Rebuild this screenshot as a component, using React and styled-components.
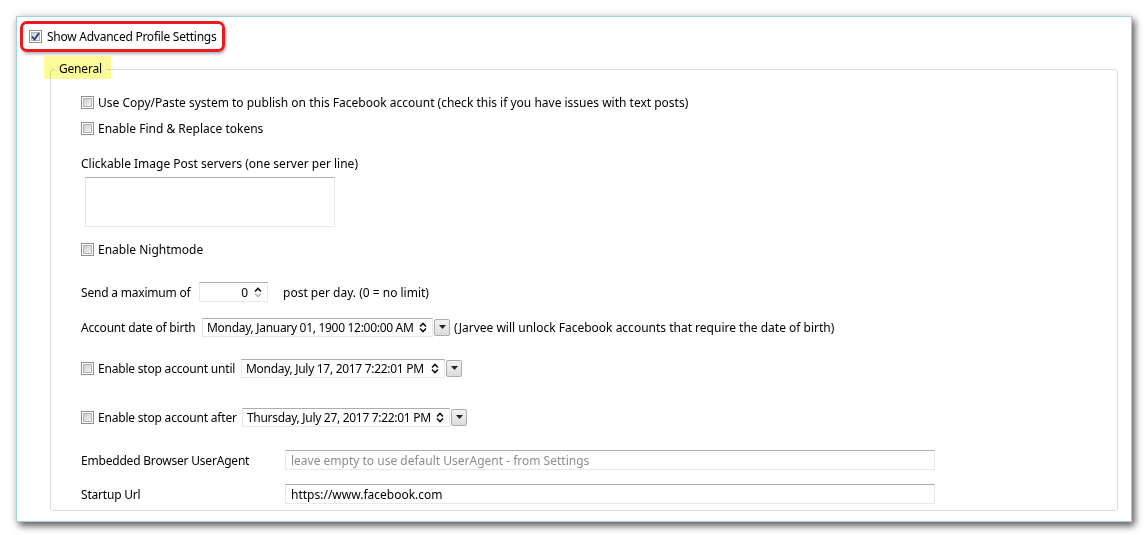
import React from 'react';
import styled, { createGlobalStyle } from 'styled-components';

const GlobalStyle = createGlobalStyle`
  html, body { margin: 0; padding: 0; background: #fff; }
  body {
    font-family: "Noto Sans", "Open Sans", sans-serif;
    font-size: 12px;
    color: #000;
  }
`;

const CheckMark = () => (
  <svg width="9" height="9" viewBox="0 0 9 9">
    <path d="M1 4.5 L3.5 7.5 L8 1" fill="none" stroke="#2b3589" strokeWidth="1.8" />
  </svg>
);

const SpinArrows = ({ downDisabled }) => (
  <svg width="8" height="13" viewBox="0 0 8 13">
    <path d="M1 5.5 L4 2.5 L7 5.5" fill="none" stroke="#111" strokeWidth="1.6" />
    <path d="M1 7.5 L4 10.5 L7 7.5" fill="none" stroke={downDisabled ? '#b8b8b8' : '#111'} strokeWidth="1.6" />
  </svg>
);

const CheckBox = ({ checked }) => (
  <Box>{checked && <CheckMark />}</Box>
);

const DatePicker = ({ value, width }) => (
  <PickerWrap>
    <PickerField $w={width}>
      <span>{value}</span>
      <SpinArrows />
    </PickerField>
    <DropButton>
      <svg width="7" height="4" viewBox="0 0 7 4"><path d="M0 0 H7 L3.5 4 Z" fill="#222" /></svg>
    </DropButton>
  </PickerWrap>
);

const App = () => (
  <>
    <GlobalStyle />
    <Page>
      <Window>
        <Annotated>
          <CheckBox checked />
          <span>Show Advanced Profile Settings</span>
        </Annotated>

        <GroupBox>
          <Legend>
            General
            <Highlight />
          </Legend>

          <Row $top={15}>
            <CheckBox />
            <span>Use Copy/Paste system to publish on this Facebook account (check this if you have issues with text posts)</span>
          </Row>
          <Row $top={6}>
            <CheckBox />
            <span>Enable Find &amp; Replace tokens</span>
          </Row>
          <Row $top={15}>
            <span>Clickable Image Post servers (one server per line)</span>
          </Row>
          <TextArea />
          <Row $top={12}>
            <CheckBox />
            <span>Enable Nightmode</span>
          </Row>
          <Row $top={23}>
            <Label $w={114}>Send a maximum of</Label>
            <NumberField>
              <span>0</span>
              <SpinArrows downDisabled />
            </NumberField>
            <Note $gap={15}>post per day. (0 = no limit)</Note>
          </Row>
          <Row $top={15}>
            <Label $w={117}>Account date of birth</Label>
            <DatePicker value="Monday, January 01, 1900 12:00:00 AM" width={231} />
            <Note $gap={4}>(Jarvee will unlock Facebook accounts that require the date of birth)</Note>
          </Row>
          <Row $top={21}>
            <CheckBox />
            <Label $w={139}>Enable stop account until</Label>
            <DatePicker value="Monday, July 17, 2017 7:22:01 PM" width={204} />
          </Row>
          <Row $top={29}>
            <CheckBox />
            <Label $w={140}>Enable stop account after</Label>
            <DatePicker value="Thursday, July 27, 2017 7:22:01 PM" width={208} />
          </Row>
          <Row $top={23}>
            <Label $w={200}>Embedded Browser UserAgent</Label>
            <TextInput $placeholder>leave empty to use default UserAgent - from Settings</TextInput>
          </Row>
          <Row $top={14}>
            <Label $w={200}>Startup Url</Label>
            <TextInput>https://www.facebook.com</TextInput>
          </Row>
        </GroupBox>
      </Window>
    </Page>
  </>
);

export default App;

const Page = styled.div`
  width: 1147px;
  height: 535px;
  box-sizing: border-box;
  padding: 16px 0 0 16px;
  overflow: hidden;
`;

const Window = styled.div`
  width: 1116px;
  height: 506px;
  box-sizing: border-box;
  border: 1px solid #9fd3e3;
  background: #fff;
  box-shadow: 3px 4px 7px rgba(0, 0, 0, 0.6), 0 0 9px rgba(0, 0, 0, 0.12);
  padding: 4px 13px 0 3px;
  overflow: hidden;
  display: flex;
  flex-direction: column;
`;

const Annotated = styled.div`
  align-self: flex-start;
  display: inline-flex;
  align-items: center;
  gap: 5px;
  box-sizing: border-box;
  height: 31px;
  padding: 0 5px 0 6px;
  border: 3px solid #ea1b1f;
  border-radius: 7px;
  box-shadow: 1px 2px 3px rgba(0, 0, 0, 0.3);
  white-space: nowrap;
  letter-spacing: -0.25px;
`;

const Box = styled.span`
  position: relative;
  flex: none;
  width: 13px;
  height: 13px;
  box-sizing: border-box;
  border: 1px solid #8e8f8f;
  background: #fff;
  display: flex;
  align-items: center;
  justify-content: center;

  &::before {
    content: "";
    position: absolute;
    inset: 1px;
    background: linear-gradient(135deg, #cbcdcf, #f3f3f3);
    border: 1px solid #aeb3b9;
    box-sizing: border-box;
  }

  svg { position: relative; }
`;

const GroupBox = styled.div`
  margin: 17px 0 0 30px;
  border: 1px solid #d5dfe5;
  border-radius: 3px;
  padding: 0 0 6px 30px;
  display: flex;
  flex-direction: column;
`;

const Legend = styled.span`
  position: relative;
  align-self: flex-start;
  margin: -9px 0 0 -26px;
  padding: 0 4px;
  line-height: 16px;
  background: #fff;
  letter-spacing: -0.2px;
`;

const Highlight = styled.span`
  position: absolute;
  left: -11px;
  top: -5px;
  width: 67px;
  height: 23px;
  background: #fcfb9a;
  mix-blend-mode: multiply;
  pointer-events: none;
`;

const Row = styled.div`
  display: flex;
  align-items: center;
  gap: 4px;
  height: 20px;
  margin-top: ${({ $top }) => $top}px;
  white-space: nowrap;
`;

const Label = styled.span`
  flex: none;
  width: ${({ $w }) => $w}px;
  letter-spacing: -0.2px;
`;

const Note = styled.span`
  margin-left: ${({ $gap }) => $gap - 4}px;
`;

const TextArea = styled.div`
  margin: 4px 0 0 4px;
  width: 250px;
  height: 50px;
  box-sizing: border-box;
  border: 1px solid #e3e9ef;
  border-top-color: #abadb3;
`;

const fieldBorder = `
  box-sizing: border-box;
  border: 1px solid #e3e9ef;
  border-top-color: #abadb3;
  background: #fff;
`;

const NumberField = styled.div`
  ${fieldBorder}
  width: 69px;
  height: 20px;
  display: flex;
  align-items: center;
  justify-content: flex-end;
  gap: 6px;
  padding-right: 5px;
`;

const PickerWrap = styled.div`
  display: flex;
  align-items: center;
  gap: 1px;
`;

const PickerField = styled.div`
  ${fieldBorder}
  width: ${({ $w }) => $w}px;
  height: 19px;
  display: flex;
  align-items: center;
  justify-content: space-between;
  padding: 0 5px 0 4px;
  letter-spacing: -0.3px;
`;

const DropButton = styled.div`
  width: 16px;
  height: 17px;
  box-sizing: border-box;
  border: 1px solid #acacac;
  border-radius: 2px;
  background: linear-gradient(#f2f2f2, #dcdcdc);
  display: flex;
  align-items: center;
  justify-content: center;
`;

const TextInput = styled.div`
  ${fieldBorder}
  width: 650px;
  height: 20px;
  display: flex;
  align-items: center;
  padding: 0 5px;
  color: ${({ $placeholder }) => ($placeholder ? '#8d8d8d' : '#000')};
`;
